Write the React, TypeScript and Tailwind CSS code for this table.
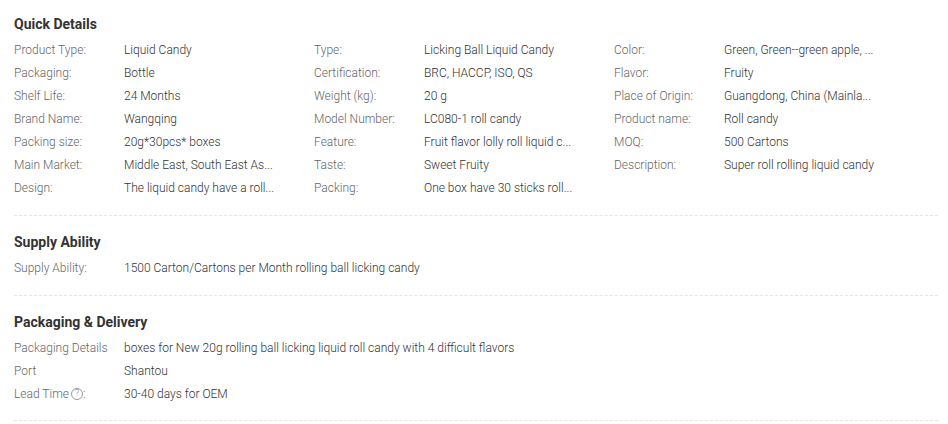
import React from "react";

type Item = [string, string];

const quick: Item[][] = [
  [
    ["Product Type:", "Liquid Candy"],
    ["Packaging:", "Bottle"],
    ["Shelf Life:", "24 Months"],
    ["Brand Name:", "Wangqing"],
    ["Packing size:", "20g*30pcs* boxes"],
    ["Main Market:", "Middle East, South East As..."],
    ["Design:", "The liquid candy have a roll..."],
  ],
  [
    ["Type:", "Licking Ball Liquid Candy"],
    ["Certification:", "BRC, HACCP, ISO, QS"],
    ["Weight (kg):", "20 g"],
    ["Model Number:", "LC080-1 roll candy"],
    ["Feature:", "Fruit flavor lolly roll liquid c..."],
    ["Taste:", "Sweet Fruity"],
    ["Packing:", "One box have 30 sticks roll..."],
  ],
  [
    ["Color:", "Green, Green--green apple, ..."],
    ["Flavor:", "Fruity"],
    ["Place of Origin:", "Guangdong, China (Mainla..."],
    ["Product name:", "Roll candy"],
    ["MOQ:", "500 Cartons"],
    ["Description:", "Super roll rolling liquid candy"],
  ],
];

function Row({ label, value }: { label: React.ReactNode; value: string }) {
  return (
    <div className="flex h-[23px] items-center font-light">
      <div className="w-[110px] shrink-0 text-[#666]">{label}</div>
      <div className="whitespace-nowrap text-[#333]">{value}</div>
    </div>
  );
}

function Divider() {
  return <div className="mx-[14px] mr-[10px] border-t border-dashed border-[#e5e5e5]" />;
}

export default function App() {
  return (
    <div
      className="w-[948px] h-[424px] bg-white overflow-hidden text-[12px]"
      style={{ fontFamily: "Roboto, 'Liberation Sans', sans-serif" }}
    >
      <section className="px-[14px] pt-[15px] pb-[16px]">
        <h3 className="h-[18px] leading-[18px] text-[14px] font-bold text-[#333]">Quick Details</h3>
        <div className="mt-[5px] flex">
          {quick.map((col, i) => (
            <div key={i} className="w-[300px] shrink-0">
              {col.map(([l, v]) => (
                <Row key={l} label={l} value={v} />
              ))}
            </div>
          ))}
        </div>
      </section>
      <Divider />
      <section className="px-[14px] pt-[17px] pb-[16px]">
        <h3 className="h-[18px] leading-[18px] text-[14px] font-bold text-[#333]">Supply Ability</h3>
        <div className="mt-[5px]">
          <Row label="Supply Ability:" value="1500 Carton/Cartons per Month rolling ball licking candy" />
        </div>
      </section>
      <Divider />
      <section className="px-[14px] pt-[17px] pb-[15px]">
        <h3 className="h-[18px] leading-[18px] text-[14px] font-bold text-[#333]">Packaging &amp; Delivery</h3>
        <div className="mt-[5px]">
          <Row label="Packaging Details" value="boxes for New 20g rolling ball licking liquid roll candy with 4 difficult flavors" />
          <Row label="Port" value="Shantou" />
          <Row
            label={
              <span className="inline-flex items-center">
                Lead Time
                <span className="ml-[2px] inline-flex h-[12px] w-[12px] items-center justify-center rounded-full border border-[#999] text-[9px] leading-none text-[#888]">
                  ?
                </span>
                :
              </span>
            }
            value="30-40 days for OEM"
          />
        </div>
      </section>
      <Divider />
    </div>
  );
}
